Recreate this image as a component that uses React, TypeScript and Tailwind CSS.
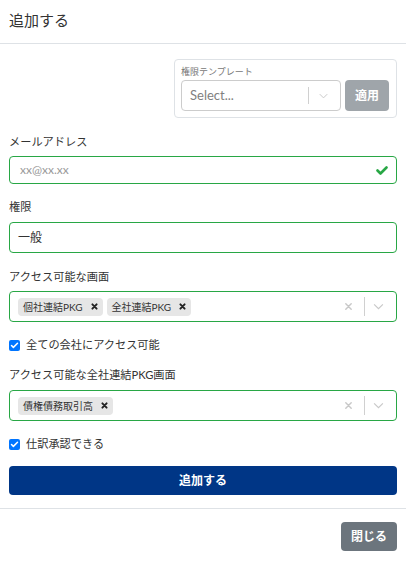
import { Check } from "lucide-react";

const font = "font-['Lato','Noto_Sans_CJK_JP',sans-serif]";

const SmallX = ({ className }: { className?: string }) => (
  <svg viewBox="0 0 10 10" className={className} fill="none" stroke="currentColor" strokeLinecap="round">
    <path d="M2 2 L8 8 M8 2 L2 8" />
  </svg>
);

const Chevron = ({ className }: { className?: string }) => (
  <svg viewBox="0 0 12 8" className={className} fill="none" stroke="currentColor" strokeWidth="1.3">
    <path d="M1 1.5 L6 6.5 L11 1.5" />
  </svg>
);

const Chip = ({ label }: { label: string }) => (
  <div className="flex items-center h-[18px] bg-[#e6e6e6] rounded-sm pl-[5px] pr-[5px]">
    <span className="text-[10px] text-[#333] leading-none">{label}</span>
    <SmallX className="ml-[8px] w-[7px] h-[7px] text-[#222] [stroke-width:2.8]" />
  </div>
);

const MultiSelect = ({ values }: { values: string[] }) => (
  <div className="flex items-center h-[31px] border border-[#28a745] rounded pl-[8px]">
    <div className="flex-1 flex gap-[4px]">
      {values.map((v) => (
        <Chip key={v} label={v} />
      ))}
    </div>
    <SmallX className="w-[9px] h-[9px] text-[#c8c8c8] [stroke-width:1.6]" />
    <div className="ml-[11px] w-px h-[19px] bg-[#d0d0d0]" />
    <Chevron className="ml-[8px] mr-[12px] w-[11px] h-[7px] text-[#c8c8c8]" />
  </div>
);

const CheckRow = ({ label }: { label: string }) => (
  <div className="flex items-center h-[18px]">
    <span className="w-[11px] h-[11px] rounded-[2px] bg-[#0075ff] flex items-center justify-center">
      <Check className="w-[9px] h-[9px] text-white" strokeWidth={4} />
    </span>
    <span className="ml-[6px] text-[11.2px] text-[#333]">{label}</span>
  </div>
);

const Label = ({ children }: { children: string }) => (
  <div className="h-[18px] leading-[18px] text-[11.2px] text-[#333]">{children}</div>
);

export default function App() {
  return (
    <div className={`w-[406px] h-[561px] bg-white flex flex-col ${font}`}>
      <div className="h-[44px] border-b border-[#dee2e6] px-[9px] pb-[3px] flex items-center">
        <h1 className="text-[15px] text-[#333]">追加する</h1>
      </div>

      <div className="px-[9px] flex flex-col">
        <div className="flex justify-end mt-[15px]">
          <div className="w-[223px] h-[59px] border border-[#dee2e6] rounded px-[6px] pt-[6px]">
            <div className="text-[9px] leading-[12px] text-[#777]">権限テンプレート</div>
            <div className="flex mt-[2px] gap-[4px] pr-[1px]">
              <div className="flex-1 h-[31px] border border-[#ccc] rounded flex items-center pl-[8px]">
                <span className="flex-1 text-[13px] text-[#808080]">Select...</span>
                <div className="w-px h-[17px] bg-[#d0d0d0]" />
                <Chevron className="ml-[10px] mr-[12px] w-[9px] h-[6px] text-[#c8c8c8]" />
              </div>
              <button className="w-[44px] h-[31px] rounded bg-[#9fa5aa] text-white text-[12px] font-bold">適用</button>
            </div>
          </div>
        </div>

        <div className="mt-[15px] mb-[5px]">
          <Label>メールアドレス</Label>
        </div>
        <div className="h-[28px] border border-[#28a745] rounded flex items-center pl-[10px] pr-[8px]">
          <span className="flex-1 text-[12px] text-[#999]">xx@xx.xx</span>
          <svg viewBox="0 0 12 9" className="w-[12px] h-[9px]" fill="none" stroke="#28a745" strokeWidth="2.6" strokeLinecap="round" strokeLinejoin="round">
            <path d="M1.5 4.5 L4.5 7.5 L10.5 1.5" />
          </svg>
        </div>

        <div className="mt-[14px] mb-[6px]">
          <Label>権限</Label>
        </div>
        <div className="h-[31px] border border-[#28a745] rounded flex items-center pl-[8px]">
          <span className="text-[12px] text-[#333]">一般</span>
        </div>

        <div className="mt-[15px] mb-[5px]">
          <Label>アクセス可能な画面</Label>
        </div>
        <MultiSelect values={["個社連結PKG", "全社連結PKG"]} />

        <div className="mt-[14px]">
          <CheckRow label="全ての会社にアクセス可能" />
        </div>

        <div className="mt-[12px] mb-[6px]">
          <Label>アクセス可能な全社連結PKG画面</Label>
        </div>
        <MultiSelect values={["債権債務取引高"]} />

        <div className="mt-[14px]">
          <CheckRow label="仕訳承認できる" />
        </div>

        <button className="mt-[13px] h-[29px] rounded bg-[#003686] text-white text-[12px] font-bold">追加する</button>
      </div>

      <div className="mt-[13px] border-t border-[#dee2e6] pt-[13px] px-[9px] flex justify-end">
        <button className="w-[56px] h-[29px] rounded bg-[#6c757d] text-white text-[12px] font-bold">閉じる</button>
      </div>
    </div>
  );
}
